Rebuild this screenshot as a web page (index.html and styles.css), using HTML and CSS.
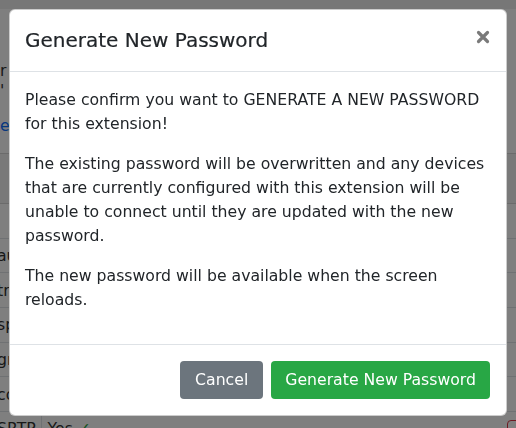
FILE: index.html
```html
<!DOCTYPE html>
<html lang="en">
<head>
<meta charset="utf-8">
<title>Generate New Password</title>
<link rel="stylesheet" href="styles.css">
</head>
<body>
<div class="page">
  <div class="topbar"></div>
  <div class="intro">
    <p class="intro-line">r</p>
    <p class="intro-line">'</p>
    <p class="intro-link">e</p>
  </div>
  <table class="ext-table">
    <colgroup><col class="col-label"><col class="col-value"><col class="col-actions"></colgroup>
    <thead>
      <tr><th></th><th></th><th></th></tr>
    </thead>
    <tbody>
      <tr><td></td><td></td><td></td></tr>
      <tr><td>auth</td><td>Yes</td><td></td></tr>
      <tr><td>trunk</td><td>Yes</td><td></td></tr>
      <tr><td>spy</td><td>Yes</td><td></td></tr>
      <tr><td>group</td><td>Yes</td><td></td></tr>
      <tr><td>codec</td><td>Yes</td><td></td></tr>
      <tr><td>SRTP</td><td>Yes <span class="check">✓</span></td><td class="actions"><span class="danger-btn"></span></td></tr>
    </tbody>
  </table>
</div>

<div class="backdrop"></div>

<div class="modal" role="dialog" aria-labelledby="modal-title">
  <div class="modal-header">
    <h5 class="modal-title" id="modal-title">Generate New Password</h5>
    <button class="close" type="button" aria-label="Close">
      <svg viewBox="0 0 14 14" width="14" height="14"><path d="M2.5 2.5 L11.5 11.5 M11.5 2.5 L2.5 11.5" stroke="#7a7a7a" stroke-width="3.2" stroke-linecap="round"/></svg>
    </button>
  </div>
  <div class="modal-body">
    <p>Please confirm you want to GENERATE A NEW PASSWORD for this extension!</p>
    <p>The existing password will be overwritten and any devices that are currently configured with this extension will be unable to connect until they are updated with the new password.</p>
    <p>The new password will be available when the screen reloads.</p>
  </div>
  <div class="modal-footer">
    <button class="btn btn-secondary" type="button">Cancel</button>
    <button class="btn btn-success" type="button">Generate New Password</button>
  </div>
</div>
</body>
</html>
```

FILE: styles.css
```css
html, body {
  margin: 0;
  padding: 0;
  height: 100%;
  overflow: hidden;
}

body {
  font-family: "DejaVu Sans", "Open Sans", sans-serif;
  color: #212529;
  background: #ffffff;
  font-size: 15.7px;
}

.page {
  margin-left: -3px;
  width: 542px;
  height: 428px;
  overflow: hidden;
}

.topbar {
  height: 9px;
  background: #eeeeee;
}

.intro {
  height: 144px;
  box-sizing: border-box;
  padding: 52px 0 0 3px;
}

.intro-line {
  margin: 0;
  height: 20px;
  line-height: 20px;
  color: #333;
}

.intro-link {
  margin: 15px 0 0;
  color: #0d6efd;
  line-height: 20px;
}

.ext-table {
  border-collapse: collapse;
  width: 100%;
  table-layout: fixed;
}

.col-label {
  width: 44px;
}

.col-value {
  width: 200px;
}

.ext-table th {
  height: 49px;
  padding: 0;
  background: #f2f2f2;
  border-top: 1px solid #d6d6d6;
  border-bottom: 1px solid #d6d6d6;
}

.ext-table td {
  height: 33.7px;
  border-bottom: 1px solid #dee2e6;
  padding: 0;
  color: #333;
  white-space: nowrap;
  overflow: hidden;
}

.ext-table td:first-child {
  border-right: 1px solid #dee2e6;
}

.ext-table td:nth-child(2) {
  padding-left: 6px;
}

.check {
  color: #28a745;
}

.actions {
  text-align: right;
}

.danger-btn {
  display: inline-block;
  width: 30px;
  height: 22px;
  margin-top: 6px;
  border: 1px solid #dc3545;
  border-radius: 4px;
  vertical-align: top;
}

.backdrop {
  position: fixed;
  inset: 0;
  background: rgba(0, 0, 0, 0.5);
}

.modal {
  position: fixed;
  left: 9px;
  top: 9px;
  width: 498px;
  box-sizing: border-box;
  background: #ffffff;
  border: 1px solid rgba(0, 0, 0, 0.2);
  border-radius: 6px;
}

.modal-header {
  display: flex;
  justify-content: space-between;
  align-items: flex-start;
  padding: 15px 15px 16px;
  border-bottom: 1px solid #dee2e6;
}

.modal-title {
  margin: 0;
  font-size: 20px;
  font-weight: 500;
  line-height: 30px;
  color: #212529;
  -webkit-text-stroke: 0.2px #212529;
}

.close {
  background: none;
  border: 0;
  padding: 0;
  margin-top: 5px;
  margin-right: 1px;
  width: 14px;
  height: 14px;
  cursor: pointer;
  display: flex;
}

.modal-body {
  padding: 16px 15px;
}

.modal-body p {
  margin: 0 0 16px;
  font-size: 15.7px;
  line-height: 24px;
}

.modal-footer {
  display: flex;
  justify-content: flex-end;
  gap: 8px;
  padding: 16px;
  border-top: 1px solid #dee2e6;
}

.btn {
  font-family: inherit;
  font-size: 15.7px;
  line-height: 24px;
  padding: 7px 14px;
  border: 0;
  border-radius: 4px;
  color: #ffffff;
  cursor: pointer;
}

.btn-secondary {
  background: #6c757d;
  padding: 7px 15px;
}

.btn-success {
  background: #28a745;
}
```
